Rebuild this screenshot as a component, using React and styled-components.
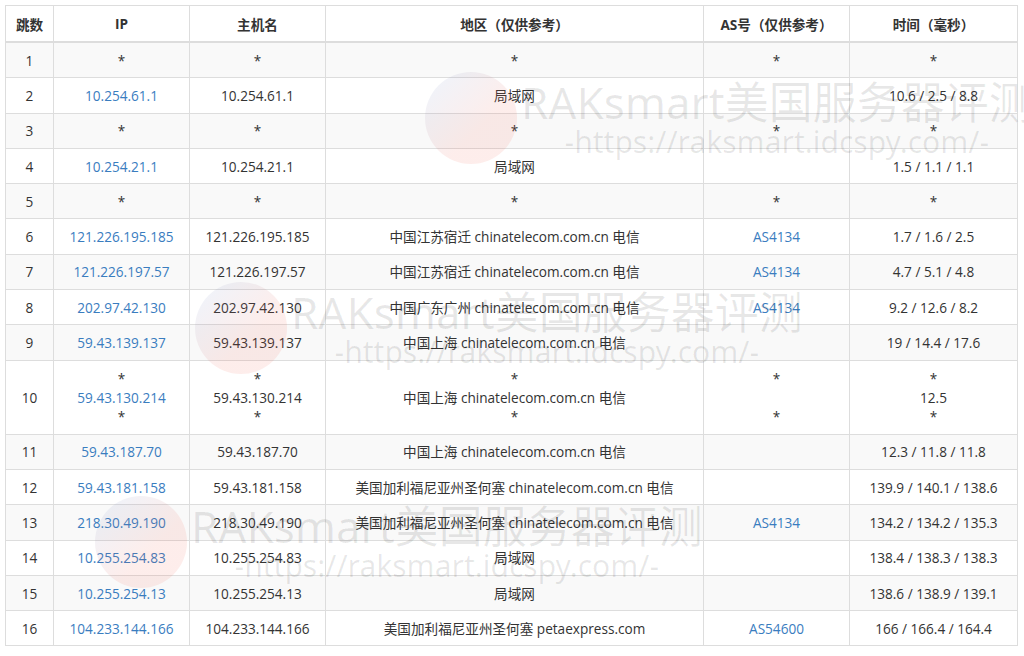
import React from "react";
import styled, { createGlobalStyle } from "styled-components";

const G = createGlobalStyle`
  body { margin: 0; background: #fff; font-family: "Open Sans", "Noto Sans CJK SC", sans-serif; }
`;
const Wrap = styled.div` padding: 5px 7px 0 5px; position: relative; `;
const Table = styled.table`
  width: 1012px; border-collapse: collapse; table-layout: fixed;
  font-size: 13.6px; color: #333;
`;
const Th = styled.th`
  height: 35px; border: 1px solid #ddd; border-bottom: 2px solid #ddd;
  font-weight: 700; text-align: center; padding: 0;
`;
const Tr = styled.tr` background: ${p => (p.$odd ? "#f9f9f9" : "#fff")}; `;
const Td = styled.td`
  height: ${p => (p.$tall ? 73 : 34.3)}px; border: 1px solid #ddd; text-align: center;
  padding: 0; line-height: 19px; color: #333; white-space: nowrap;
`;
const Line = styled.div` color: ${p => (p.$link ? "#3a7dbf" : "#333")}; `;
const Mark = styled.div`
  position: absolute; left: ${p => p.$x}px; top: ${p => p.$y}px;
  pointer-events: none; display: flex; align-items: center; gap: 4px;
  font-family: "Noto Sans", "Noto Sans CJK SC", sans-serif; color: rgba(0,0,0,0.09);
`;
const MarkText = styled.div` display: flex; flex-direction: column; align-items: center; `;
const Big = styled.div` font-size: 44px; line-height: 48px; white-space: nowrap; `;
const Url = styled.div` font-size: 30px; line-height: 32px; white-space: nowrap; `;
const Logo = styled.div`
  width: 92px; height: 92px; border-radius: 50%;
  background: linear-gradient(135deg, rgba(80,150,230,0.1), rgba(240,80,60,0.1) 60%);
`;

const W = ({ x, y }) => (
  <Mark $x={x} $y={y}>
    <Logo />
    <MarkText>
      <Big>RAKsmart美国服务器评测</Big>
      <Url>-https://raksmart.idcspy.com/-</Url>
    </MarkText>
  </Mark>
);

const T = "chinatelecom.com.cn 电信";
const rows = [
  ["1", "*", "*", "*", "*", "*"],
  ["2", "10.254.61.1", "10.254.61.1", "局域网", "", "10.6 / 2.5 / 8.8"],
  ["3", "*", "*", "*", "*", "*"],
  ["4", "10.254.21.1", "10.254.21.1", "局域网", "", "1.5 / 1.1 / 1.1"],
  ["5", "*", "*", "*", "*", "*"],
  ["6", "121.226.195.185", "121.226.195.185", "中国江苏宿迁 " + T, "AS4134", "1.7 / 1.6 / 2.5"],
  ["7", "121.226.197.57", "121.226.197.57", "中国江苏宿迁 " + T, "AS4134", "4.7 / 5.1 / 4.8"],
  ["8", "202.97.42.130", "202.97.42.130", "中国广东广州 " + T, "AS4134", "9.2 / 12.6 / 8.2"],
  ["9", "59.43.139.137", "59.43.139.137", "中国上海 " + T, "", "19 / 14.4 / 17.6"],
  ["10", ["*", "59.43.130.214", "*"], ["*", "59.43.130.214", "*"], ["*", "中国上海 " + T, "*"], ["*", "\u00a0", "*"], ["*", "12.5", "*"]],
  ["11", "59.43.187.70", "59.43.187.70", "中国上海 " + T, "", "12.3 / 11.8 / 11.8"],
  ["12", "59.43.181.158", "59.43.181.158", "美国加利福尼亚州圣何塞 " + T, "", "139.9 / 140.1 / 138.6"],
  ["13", "218.30.49.190", "218.30.49.190", "美国加利福尼亚州圣何塞 " + T, "AS4134", "134.2 / 134.2 / 135.3"],
  ["14", "10.255.254.83", "10.255.254.83", "局域网", "", "138.4 / 138.3 / 138.3"],
  ["15", "10.255.254.13", "10.255.254.13", "局域网", "", "138.6 / 138.9 / 139.1"],
  ["16", "104.233.144.166", "104.233.144.166", "美国加利福尼亚州圣何塞 petaexpress.com", "AS54600", "166 / 166.4 / 164.4"],
];

const cell = (v, link) =>
  (Array.isArray(v) ? v : [v]).map((s, i) => (
    <Line key={i} $link={link && s !== "*"}>{s}</Line>
  ));

export default function App() {
  return (
    <Wrap>
      <G />
      <Table>
        <colgroup>
          <col style={{ width: 48 }} /><col style={{ width: 136 }} /><col style={{ width: 136 }} />
          <col style={{ width: 378 }} /><col style={{ width: 146 }} /><col style={{ width: 168 }} />
        </colgroup>
        <thead>
          <tr>
            <Th>跳数</Th><Th>IP</Th><Th>主机名</Th><Th>地区（仅供参考）</Th><Th>AS号（仅供参考）</Th><Th>时间（毫秒）</Th>
          </tr>
        </thead>
        <tbody>
          {rows.map((r, i) => {
            const tall = Array.isArray(r[1]);
            return (
              <Tr key={i} $odd={i % 2 === 0}>
                {r.map((v, j) => (
                  <Td key={j} $tall={tall}>{cell(v, j === 1 || j === 4)}</Td>
                ))}
              </Tr>
            );
          })}
        </tbody>
      </Table>
      <W x={425} y={72} />
      <W x={195} y={282} />
      <W x={95} y={496} />
    </Wrap>
  );
}
